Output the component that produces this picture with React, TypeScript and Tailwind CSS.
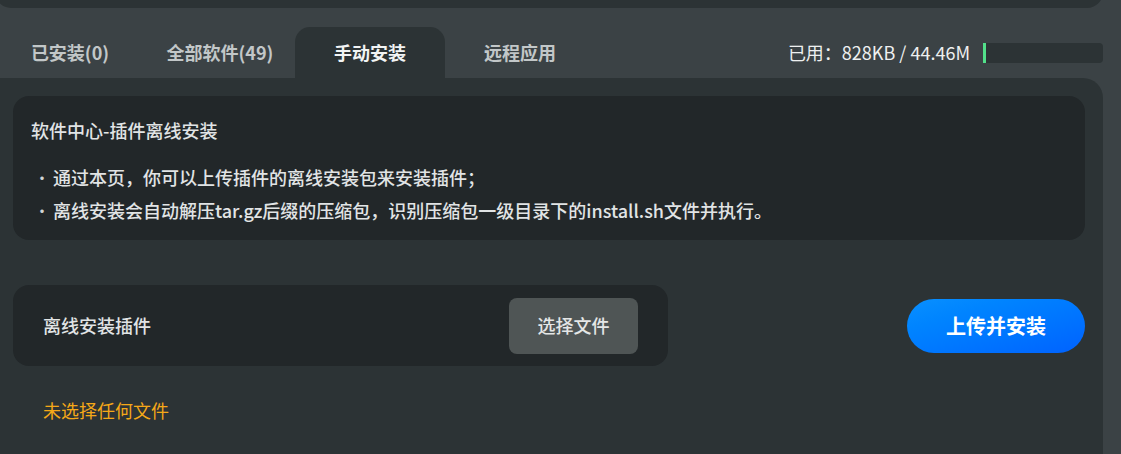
import React from "react";

const font = { fontFamily: '"Noto Sans CJK SC", "Noto Sans", sans-serif' };

export default function App() {
  const tabs = ["已安装(0)", "全部软件(49)", "手动安装", "远程应用"];
  const active = 2;
  return (
    <div
      className="w-[1121px] h-[454px] overflow-hidden bg-[#3b4245] text-[18px]"
      style={font}
    >
      <div className="-ml-[5px] w-[1108px] flex flex-col">
        {/* top panel (cut off) */}
        <div className="-mt-[20px] h-[28px] bg-[#2c3335] rounded-b-[16px]" />

        {/* tabs row */}
        <div className="mt-[19px] flex items-center justify-between">
          <div className="flex">
            {tabs.map((t, i) => (
              <div
                key={t}
                className={
                  i === active
                    ? "w-[150px] h-[51px] flex items-center justify-center rounded-t-[15px] bg-[#2c3335] text-[#f2f4f4] font-bold"
                    : "w-[150px] h-[51px] flex items-center justify-center text-[#c2c7c8] font-bold"
                }
              >
                {t}
              </div>
            ))}
          </div>
          <div className="flex items-center gap-[13px]">
            <span className="text-[#eef0f0] leading-[27px]">已用：828KB / 44.46M</span>
            <div className="w-[120px] h-[20px] bg-[#2c3335] rounded-r-[4px] flex">
              <div className="w-[3px] h-full bg-[#52e08a]" />
            </div>
          </div>
        </div>

        {/* main panel */}
        <div className="bg-[#2c3335] rounded-tr-[20px] p-[18px] h-[400px]">
          <div className="bg-[#222729] rounded-[16px] pl-[18px] pr-[30px] pt-[21px] pb-[13px]">
            <div className="text-[#e1e4e5] font-medium leading-[27px]">
              软件中心-插件离线安装
            </div>
            <ul className="mt-[17px]">
              {[
                "通过本页，你可以上传插件的离线安装包来安装插件；",
                "离线安装会自动解压tar.gz后缀的压缩包，识别压缩包一级目录下的install.sh文件并执行。",
              ].map((l) => (
                <li key={l} className="flex leading-[33px] text-[#e1e4e5] font-medium">
                  <span className="w-[22px] text-[15px] text-center text-[#d0d4d5]">•</span>
                  <span>{l}</span>
                </li>
              ))}
            </ul>
          </div>

          <div className="mt-[45px] flex items-center justify-between">
            <div className="w-[655px] h-[81px] bg-[#222729] rounded-[16px] flex items-center justify-between pl-[30px] pr-[30px]">
              <span className="text-[#e1e4e5] font-medium">离线安装插件</span>
              <div className="w-[129px] h-[56px] rounded-[8px] bg-[#4f5555] flex items-center justify-center text-[#e4e6e6] font-medium">
                选择文件
              </div>
            </div>
            <div className="w-[178px] h-[54px] rounded-full bg-linear-to-br from-[#0a90ff] to-[#0062ff] flex items-center justify-center text-white text-[20px] font-bold">
              上传并安装
            </div>
          </div>

          <div className="mt-[31px] pl-[30px] text-[#f5a818] leading-[27px]">
            未选择任何文件
          </div>
        </div>
      </div>
    </div>
  );
}
